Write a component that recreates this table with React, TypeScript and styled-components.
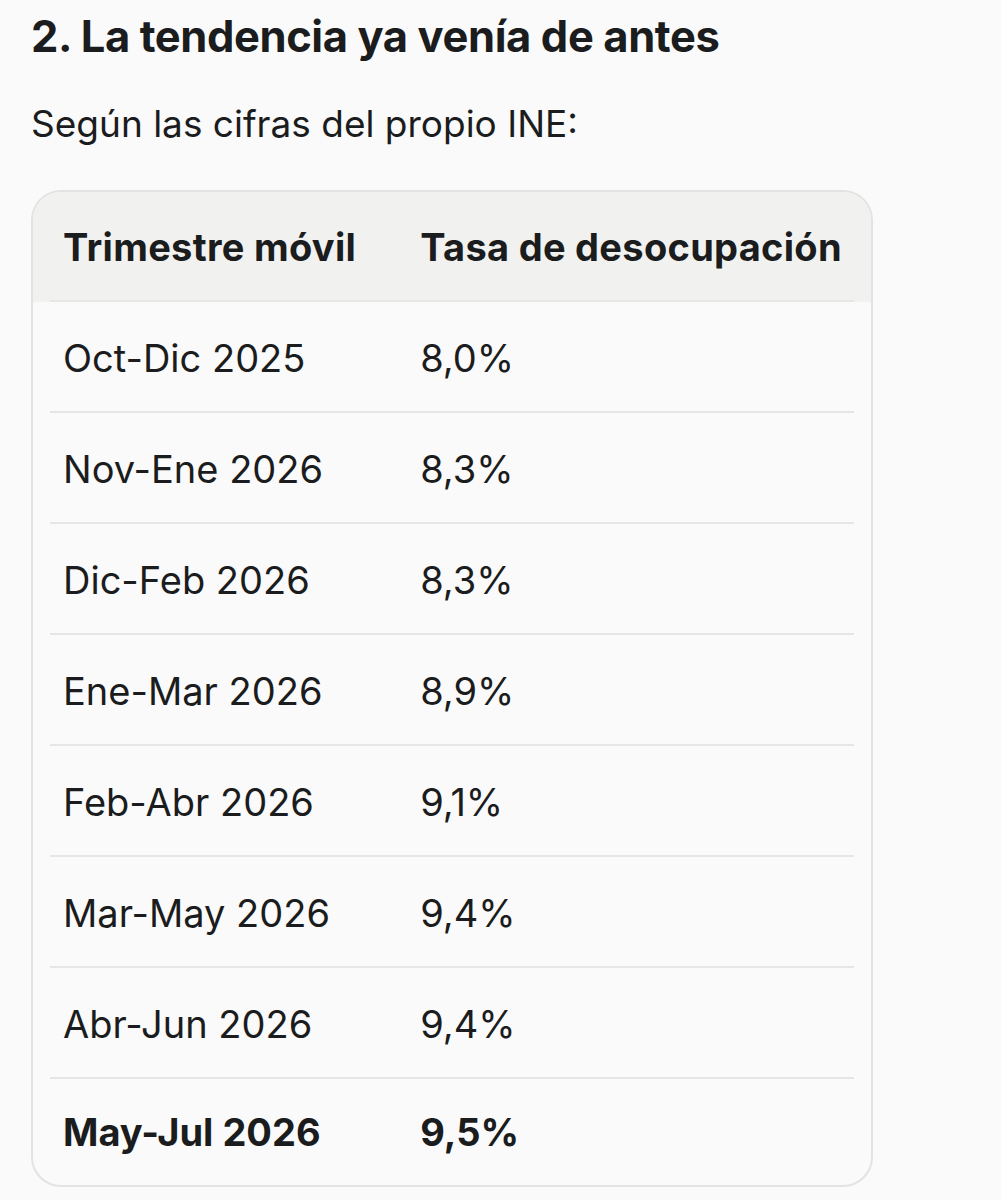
import React from "react";
import styled, { createGlobalStyle } from "styled-components";

const Global = createGlobalStyle`
  html, body { margin: 0; padding: 0; background: #fafafa; }
  body { font-family: Inter, "Open Sans", Roboto, sans-serif; color: #1b1c1d; }
`;

const Page = styled.div`
  padding: 8px 31px 0 31px;
  display: flex;
  flex-direction: column;
  align-items: flex-start;
`;

const Heading = styled.h2`
  margin: 0;
  font-size: 43.5px;
  line-height: 56px;
  font-weight: 700;
  letter-spacing: -0.4px;
`;

const Lead = styled.p`
  margin: 36px 0 0 0;
  font-size: 37px;
  line-height: 48px;
  font-weight: 400;
`;

const TableFrame = styled.div`
  margin-top: 42px;
  border: 2px solid #e3e3e3;
  border-radius: 30px;
  overflow: hidden;
`;

const Table = styled.table`
  border-collapse: collapse;
  font-size: 38px;
`;

type Pos = { $pos: "first" | "last" };

const lineBg = `
  background-repeat: no-repeat;
  background-size: calc(100% - 17px) 2px;
`;

const HeadCell = styled.th<Pos>`
  background-color: #f1f1f0;
  background-image: linear-gradient(#e6e6e6, #e6e6e6);
  ${lineBg}
  background-position: ${(p) => (p.$pos === "first" ? "17px 100%" : "0 100%")};
  text-align: left;
  font-weight: 700;
  letter-spacing: 0.3px;
  padding: 0 ${(p) => (p.$pos === "first" ? "31px 0 30px" : "29px 0 33px")};
  height: 110px;
  white-space: nowrap;
`;

const Cell = styled.td<Pos & { $bold?: boolean; $line: boolean }>`
  padding: 0 ${(p) => (p.$pos === "first" ? "31px 0 30px" : "29px 0 33px")};
  height: ${(p) => (p.$line ? "111px" : "106px")};
  white-space: nowrap;
  font-weight: ${(p) => (p.$bold ? 700 : 400)};
  background-image: ${(p) => (p.$line ? "linear-gradient(#e6e6e6, #e6e6e6)" : "none")};
  ${lineBg}
  background-position: ${(p) => (p.$pos === "first" ? "17px 100%" : "0 100%")};
`;

const rows: [string, string][] = [
  ["Oct-Dic 2025", "8,0%"],
  ["Nov-Ene 2026", "8,3%"],
  ["Dic-Feb 2026", "8,3%"],
  ["Ene-Mar 2026", "8,9%"],
  ["Feb-Abr 2026", "9,1%"],
  ["Mar-May 2026", "9,4%"],
  ["Abr-Jun 2026", "9,4%"],
  ["May-Jul 2026", "9,5%"],
];

export default function App() {
  return (
    <>
      <Global />
      <Page>
        <Heading>2. La tendencia ya venía de antes</Heading>
        <Lead>Según las cifras del propio INE:</Lead>
        <TableFrame>
          <Table>
            <thead>
              <tr>
                <HeadCell $pos="first">Trimestre móvil</HeadCell>
                <HeadCell $pos="last">Tasa de desocupación</HeadCell>
              </tr>
            </thead>
            <tbody>
              {rows.map(([a, b], i) => {
                const last = i === rows.length - 1;
                return (
                  <tr key={a}>
                    <Cell $pos="first" $bold={last} $line={!last}>{a}</Cell>
                    <Cell $pos="last" $bold={last} $line={!last}>{b}</Cell>
                  </tr>
                );
              })}
            </tbody>
          </Table>
        </TableFrame>
      </Page>
    </>
  );
}
